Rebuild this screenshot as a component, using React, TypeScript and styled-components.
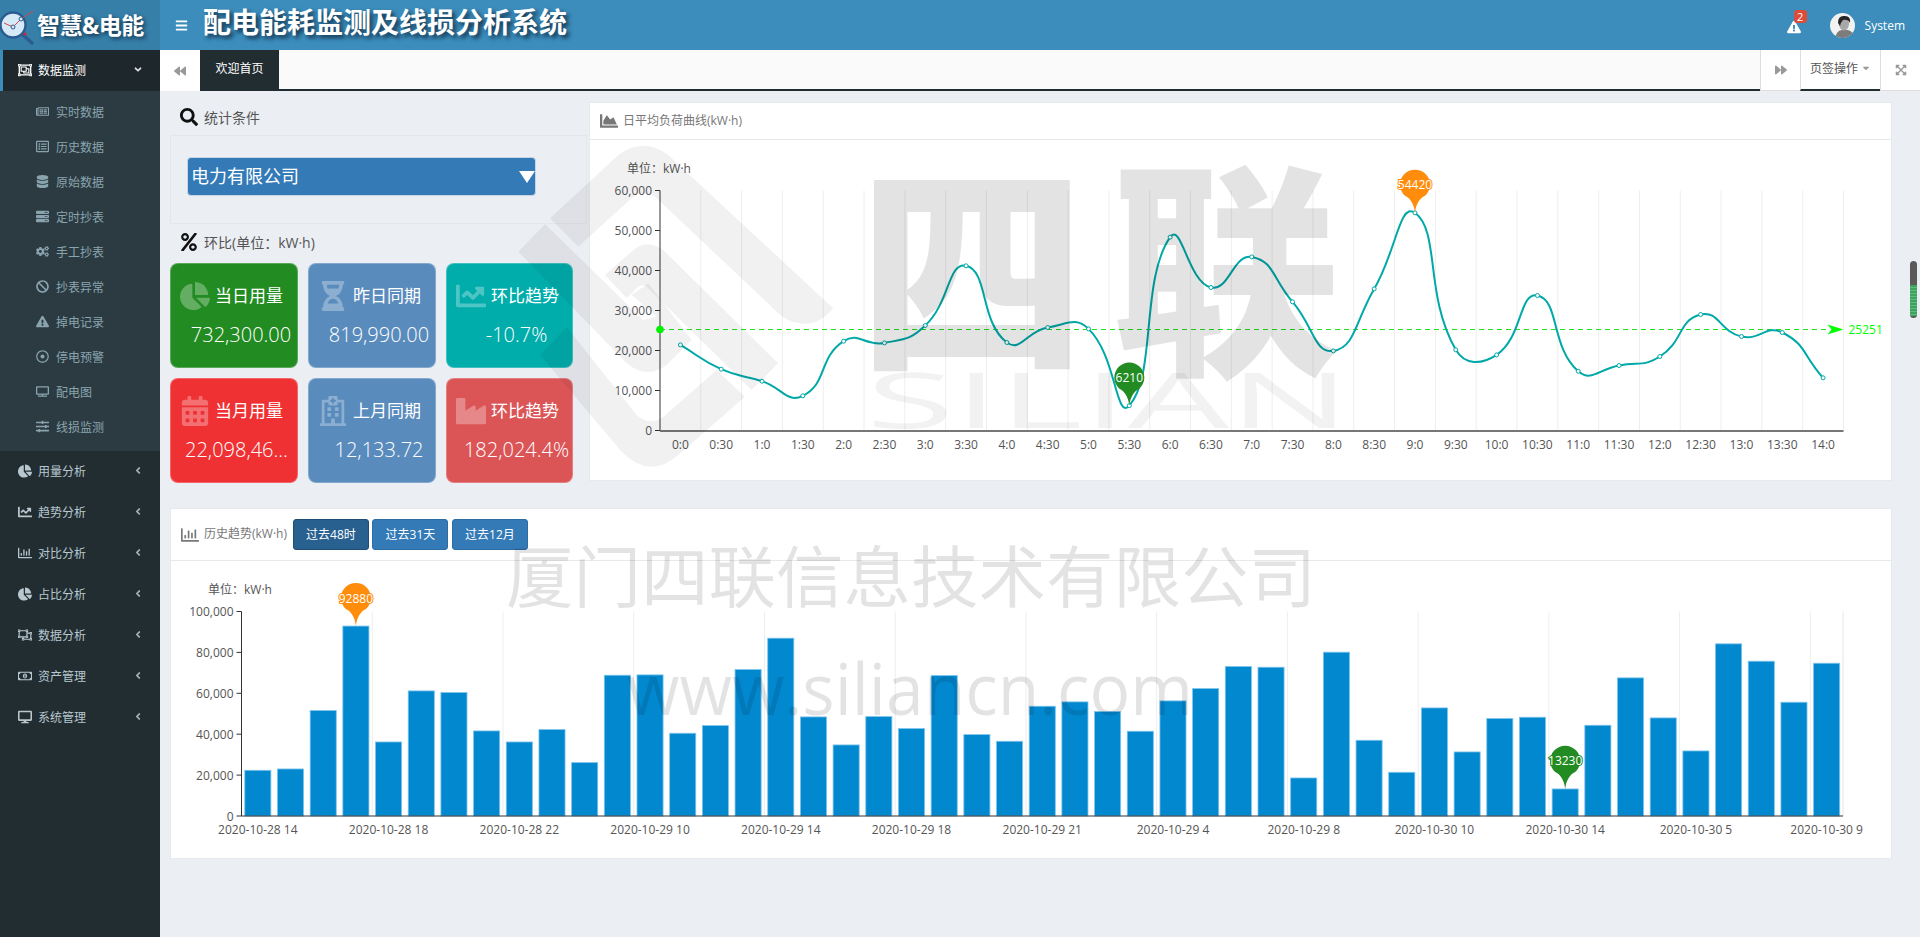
import React from 'react';
import styled, { createGlobalStyle } from 'styled-components';
import {
  FaAngleDown,
  FaAngleLeft,
  FaBackward,
  FaBan,
  FaBars,
  FaCalendarAlt,
  FaCaretDown,
  FaChartArea,
  FaChartLine,
  FaChartPie,
  FaCogs,
  FaDatabase,
  FaDesktop,
  FaExclamationTriangle,
  FaExpandArrowsAlt,
  FaForward,
  FaHourglassHalf,
  FaIndustry,
  FaPercent,
  FaRegChartBar,
  FaRegDotCircle,
  FaRegHospital,
  FaRegListAlt,
  FaRegMoneyBillAlt,
  FaRegNewspaper,
  FaRegObjectGroup,
  FaRegObjectUngroup,
  FaSearch,
  FaServer,
  FaSlidersH,
  FaTv,
} from 'react-icons/fa';

const FONT = `"Open Sans", "Noto Sans CJK SC", sans-serif`;

const GlobalStyle = createGlobalStyle`
  html, body {
    margin: 0;
    padding: 0;
    height: 100%;
    overflow: hidden;
    background: #ebeef3;
    font-family: ${FONT};
  }
  * {
    box-sizing: border-box;
  }
`;

const Page = styled.div`
  position: relative;
  width: 1920px;
  height: 937px;
  overflow: hidden;
  display: flex;
  flex-direction: column;
`;

/* top bar */
const Header = styled.header`
  height: 50px;
  flex: none;
  display: flex;
  align-items: center;
  background: #3c8dbc;
  color: #fff;
`;

const Brand = styled.div`
  width: 160px;
  height: 50px;
  flex: none;
  display: flex;
  align-items: center;
  padding-bottom: 3px;
  background: #367fa9;
  font-size: 23px;
  font-weight: 700;
  letter-spacing: -0.5px;
  text-shadow: 2px 2px 4px #12314a;
  svg {
    flex: none;
    margin: 3px 3px 0 0;
  }
`;

const MenuToggle = styled.div`
  width: 43px;
  display: flex;
  justify-content: center;
  font-size: 13px;
`;

const SystemTitle = styled.h1`
  margin: 0;
  font-size: 28px;
  font-weight: 700;
  line-height: 44px;
  padding-bottom: 6px;
  text-shadow: 3px 3px 4px #12314a;
`;

const HeaderRight = styled.div`
  margin-left: auto;
  display: flex;
  align-items: center;
  padding-right: 15px;
  font-size: 12px;
`;

const Alert = styled.div`
  position: relative;
  font-size: 14px;
  display: flex;
  margin-right: 29px;
  margin-top: 3px;
`;

const Badge = styled.span`
  position: absolute;
  top: -10px;
  left: 7px;
  width: 13px;
  height: 13px;
  border-radius: 3px;
  background: #dd4b39;
  font-size: 11px;
  line-height: 13px;
  text-align: center;
`;

const UserName = styled.span`
  margin-left: 10px;
`;

/* body */
const Body = styled.div`
  flex: 1;
  display: flex;
  min-height: 0;
`;

const Sidebar = styled.aside`
  width: 160px;
  flex: none;
  background: #222d32;
  font-size: 12px;
`;

const MenuItem = styled.div<{ $active?: boolean }>`
  height: 41px;
  display: flex;
  align-items: center;
  padding-left: ${(p) => (p.$active ? '15px' : '18px')};
  padding-right: 18px;
  padding-bottom: 2px;
  color: ${(p) => (p.$active ? '#fff' : '#b8c7ce')};
  background: ${(p) => (p.$active ? '#1e282c' : 'transparent')};
  border-left: ${(p) => (p.$active ? '3px solid #3c8dbc' : 'none')};
  svg:first-child {
    width: 14px;
    height: 14px;
    margin-right: 6px;
    flex: none;
  }
  svg:last-child {
    margin-left: auto;
    width: 8px;
    height: 11px;
    opacity: 0.85;
  }
`;

const SubMenu = styled.div`
  background: #2c3b41;
  padding: 5px 0;
`;

const SubItem = styled.div`
  height: 35px;
  display: flex;
  align-items: center;
  padding-left: 36px;
  padding-bottom: 4px;
  color: #8aa4af;
  svg {
    width: 13px;
    height: 13px;
    margin-right: 7px;
    flex: none;
  }
`;

const Main = styled.main`
  flex: 1;
  min-width: 0;
  display: flex;
  flex-direction: column;
`;

const TabBar = styled.div`
  height: 41px;
  flex: none;
  display: flex;
  background: #fafafa;
  border-bottom: 2px solid #222d32;
  font-size: 12px;
`;

const TabButton = styled.div<{ $side?: boolean }>`
  width: 40px;
  height: 41px;
  flex: none;
  display: flex;
  align-items: center;
  justify-content: center;
  background: #fff;
  color: #999;
  font-size: 12px;
  border-left: ${(p) => (p.$side ? '1px solid #ddd' : 'none')};
  border-bottom: ${(p) => (p.$side ? '1px solid #ddd' : 'none')};
`;

const ActiveTab = styled.div`
  width: 79px;
  height: 39px;
  display: flex;
  align-items: center;
  justify-content: center;
  padding-bottom: 4px;
  background: #222d32;
  color: #fff;
`;

const Spacer = styled.div`
  flex: 1;
`;

const TabMenu = styled.div`
  width: 80px;
  height: 41px;
  flex: none;
  display: flex;
  align-items: center;
  justify-content: center;
  gap: 3px;
  padding-bottom: 3px;
  background: #fff;
  color: #555;
  border-left: 1px solid #ddd;
  border-bottom: 2px solid #222d32;
  svg {
    color: #999;
    font-size: 10px;
  }
`;

const Content = styled.div`
  flex: 1;
  padding: 11px 28px 0 10px;
`;

const TopRow = styled.div`
  display: flex;
  height: 379px;
`;

const LeftColumn = styled.section`
  width: 419px;
  flex: none;
`;

const SectionTitle = styled.div<{ $height: number }>`
  height: ${(p) => p.$height}px;
  display: flex;
  align-items: center;
  padding: 0 0 4px 10px;
  gap: 6px;
  color: #555;
  font-size: 14px;
  svg {
    color: #111;
    font-size: 18px;
    flex: none;
  }
`;

const FilterBox = styled.div`
  width: 417px;
  height: 89px;
  padding: 21px 0 0 16px;
  border: 1px solid #e4e7ea;
`;

const CompanySelect = styled.div`
  position: relative;
  width: 349px;
  height: 39px;
  padding-left: 3px;
  border: 1px solid #c5d5e6;
  border-radius: 4px;
  background: #337ab7;
  color: #fff;
  font-size: 18px;
  line-height: 37px;
  &::after {
    content: '';
    position: absolute;
    right: 0;
    top: 13px;
    border-left: 8px solid transparent;
    border-right: 8px solid transparent;
    border-top: 12px solid #fff;
  }
`;

const CardGrid = styled.div`
  display: grid;
  grid-template-columns: 128px 128px 127px;
  grid-auto-rows: 105px;
  column-gap: 10px;
  row-gap: 10px;
`;

const Card = styled.div<{ $color: string }>`
  background: ${(p) => p.$color};
  border-radius: 8px;
  border: 1px solid rgba(255, 255, 255, 0.25);
  color: #fff;
  padding: 15px 0 0 0;
  overflow: hidden;
`;

const CardHead = styled.div`
  display: flex;
  align-items: center;
  height: 34px;
`;

const CardIcon = styled.div`
  width: 44px;
  flex: none;
  padding-left: 9px;
  display: flex;
  color: rgba(255, 255, 255, 0.3);
  font-size: 30px;
`;

const CardTitle = styled.div`
  font-size: 17px;
  white-space: nowrap;
  margin-bottom: 4px;
`;

const CardValue = styled.div`
  margin: 8px 0 0 14px;
  font-size: 20px;
  line-height: 28px;
  font-weight: 300;
  text-align: center;
  white-space: nowrap;
  overflow: hidden;
  text-overflow: ellipsis;
`;

const Panel = styled.section`
  background: #fff;
  border: 1px solid #e7eaec;
  flex: 1;
  min-width: 0;
`;

const PanelHead = styled.div<{ $height: number }>`
  height: ${(p) => p.$height}px;
  display: flex;
  align-items: center;
  padding-left: 10px;
  border-bottom: 1px solid #e7eaec;
  color: #777;
  font-size: 12px;
  svg {
    font-size: 18px;
    margin-right: 5px;
    color: #777;
    flex: none;
  }
`;

const PanelTitle = styled.span`
  padding-bottom: 3px;
`;

const RangeButton = styled.div<{ $active?: boolean }>`
  width: 76px;
  height: 31px;
  display: flex;
  align-items: center;
  justify-content: center;
  padding-bottom: 2px;
  border-radius: 3px;
  color: #fff;
  background: ${(p) => (p.$active ? '#286090' : '#337ab7')};
  border: 1px solid ${(p) => (p.$active ? '#204d74' : '#2e6da4')};
  margin-right: 3.5px;
  &:first-of-type {
    margin-left: 6px;
  }
`;

const BottomPanel = styled(Panel)`
  margin-top: 27px;
  height: 351px;
`;

const ChartSvg = styled.svg`
  display: block;
`;

const AxisText = styled.text`
  font-family: ${FONT};
  font-size: 12px;
  fill: #555;
`;

const PinText = styled.text<{ $stroke: string }>`
  font-family: ${FONT};
  font-size: 12px;
  fill: #fff;
  stroke: ${(p) => p.$stroke};
  stroke-width: 2px;
  paint-order: stroke;
  text-anchor: middle;
  dominant-baseline: central;
`;

const MarkText = styled.text`
  font-family: ${FONT};
  font-size: 12px;
  fill: #00ff00;
`;

/* page watermark, lies over everything */
const WatermarkLayer = styled.svg`
  position: absolute;
  left: 0;
  top: 0;
  pointer-events: none;
  z-index: 5;
`;

const WatermarkText = styled.text<{ $size: number; $weight: number; $alpha: number }>`
  font-family: ${FONT};
  font-size: ${(p) => p.$size}px;
  font-weight: ${(p) => p.$weight};
  fill: rgba(0, 0, 0, ${(p) => p.$alpha});
`;

/* scroll widget on the right edge */
const ScrollWidget = styled.div`
  position: absolute;
  right: 3px;
  top: 261px;
  width: 7px;
  height: 57px;
  border-radius: 4px;
  overflow: hidden;
  background: #5a5a5a;
  z-index: 6;
  &::after {
    content: '';
    position: absolute;
    left: 0;
    right: 0;
    top: 24px;
    bottom: 2px;
    background: repeating-linear-gradient(#3fa35f 0 2px, #5dbb7b 2px 3px);
  }
`;

const subItems: [React.ComponentType, string][] = [
  [FaRegNewspaper, '实时数据'],
  [FaRegListAlt, '历史数据'],
  [FaDatabase, '原始数据'],
  [FaServer, '定时抄表'],
  [FaCogs, '手工抄表'],
  [FaBan, '抄表异常'],
  [FaExclamationTriangle, '掉电记录'],
  [FaRegDotCircle, '停电预警'],
  [FaTv, '配电图'],
  [FaSlidersH, '线损监测'],
];

const menuItems: [React.ComponentType, string][] = [
  [FaChartPie, '用量分析'],
  [FaChartLine, '趋势分析'],
  [FaRegChartBar, '对比分析'],
  [FaChartPie, '占比分析'],
  [FaRegObjectUngroup, '数据分析'],
  [FaRegMoneyBillAlt, '资产管理'],
  [FaDesktop, '系统管理'],
];

const cards: [React.ComponentType, string, string, string][] = [
  [FaChartPie, '当日用量', '732,300.00', '#228b22'],
  [FaHourglassHalf, '昨日同期', '819,990.00', '#598bbd'],
  [FaChartLine, '环比趋势', '-10.7%', '#00adab'],
  [FaCalendarAlt, '当月用量', '22,098,460.00', '#ef3134'],
  [FaRegHospital, '上月同期', '12,133.72', '#598bbd'],
  [FaIndustry, '环比趋势', '182,024.4%', '#db5557'],
];

const hours = Array.from({ length: 29 }, (_, i) => `${Math.floor(i / 2)}:${i % 2 ? '30' : '0'}`);
const dayLoad = [
  21400, 15330, 12330, 8670, 22330, 21900, 26250, 41170, 22000, 25750, 25400, 6210, 48330, 35750,
  43400, 32170, 19900, 35400, 54420, 20170, 18900, 33750, 14830, 16250, 18500, 29000, 23500, 24500,
  13170,
];

const history = [
  22350, 23000, 51550, 92880, 36200, 61170, 60360, 41600, 36200, 42250, 26100, 68840, 69000, 40460,
  44200, 71600, 86950, 48450, 34750, 48600, 42740, 68680, 39800, 36540, 53670, 55800, 51060, 41440,
  56280, 62300, 73080, 72750, 18600, 80100, 37030, 21370, 52850, 31320, 47630, 48290, 13230, 44370,
  67540, 47960, 31810, 84180, 75690, 55630, 74700,
];

const historyLabels = [
  '2020-10-28 14',
  '2020-10-28 18',
  '2020-10-28 22',
  '2020-10-29 10',
  '2020-10-29 14',
  '2020-10-29 18',
  '2020-10-29 21',
  '2020-10-29 4',
  '2020-10-29 8',
  '2020-10-30 10',
  '2020-10-30 14',
  '2020-10-30 5',
  '2020-10-30 9',
];

// same bezier rule as the chart library's smooth line
const smoothPath = (pts: [number, number][], smooth = 0.5) => {
  const clamp = (i: number) => pts[Math.max(0, Math.min(pts.length - 1, i))];
  let d = `M${pts[0][0]} ${pts[0][1]}`;
  const controls = (i: number) => {
    const [x, y] = pts[i];
    const [px, py] = clamp(i - 1);
    const [nx, ny] = clamp(i + 1);
    const l0 = Math.hypot(x - px, y - py);
    const l1 = Math.hypot(nx - x, ny - y);
    const r = l0 + l1 === 0 ? 0 : l1 / (l0 + l1);
    const dx = (nx - px) * smooth;
    const dy = (ny - py) * smooth;
    return {
      before: [x - dx * (1 - r), y - dy * (1 - r)],
      after: [x + dx * r, y + dy * r],
    };
  };
  for (let i = 1; i < pts.length; i++) {
    const a = controls(i - 1).after;
    const b = controls(i).before;
    d += ` C${a[0]} ${a[1]} ${b[0]} ${b[1]} ${pts[i][0]} ${pts[i][1]}`;
  }
  return d;
};

const Pin = ({ x, y, label, color, height = 43 }: { x: number; y: number; label: string; color: string; height?: number }) => {
  const cy = y - height + 15;
  return (
    <g>
      <path
        d={`M${x} ${y} C${x - 1} ${y - 9} ${x - 5} ${y - 15} ${x - 10} ${cy + 11} A15 15 0 1 1 ${x + 10} ${cy + 11} C${x + 5} ${y - 15} ${x + 1} ${y - 9} ${x} ${y} Z`}
        fill={color}
      />
      <PinText x={x} y={cy} $stroke={color}>
        {label}
      </PinText>
    </g>
  );
};

const YAxis = ({ left, top, bottom, labels }: { left: number; top: number; bottom: number; labels: string[] }) => (
  <g>
    <line x1={left} x2={left} y1={top} y2={bottom} stroke="#333" />
    {labels.map((t, i) => {
      const y = bottom - ((bottom - top) * i) / (labels.length - 1);
      return (
        <g key={t}>
          <line x1={left - 5} x2={left} y1={y} y2={y} stroke="#333" />
          <AxisText x={left - 8} y={y} textAnchor="end" dominantBaseline="central">
            {t}
          </AxisText>
        </g>
      );
    })}
  </g>
);

const LoadChart = () => {
  const width = 1301;
  const left = 70;
  const right = 1253.5;
  const top = 50.5;
  const bottom = 290.5;
  const step = (right - left) / dayLoad.length;
  const px = (i: number) => left + step * (i + 0.5);
  const py = (v: number) => bottom - ((bottom - top) * v) / 60000;
  const pts = dayLoad.map((v, i) => [px(i), py(v)] as [number, number]);
  const markY = py(25251);
  return (
    <ChartSvg width={width} height={340}>
      {dayLoad.map((_, i) => (
        <line key={i} x1={left + step * (i + 1)} x2={left + step * (i + 1)} y1={top} y2={bottom} stroke="#eee" />
      ))}
      <AxisText x={37} y={28} dominantBaseline="central">
        单位：kW·h
      </AxisText>
      <YAxis left={left} top={top} bottom={bottom} labels={['0', '10,000', '20,000', '30,000', '40,000', '50,000', '60,000']} />
      <line x1={left} x2={right} y1={bottom + 0.5} y2={bottom + 0.5} stroke="#777" strokeWidth={2} />
      {hours.map((h, i) => (
        <AxisText key={h} x={px(i)} y={304} textAnchor="middle" dominantBaseline="central">
          {h}
        </AxisText>
      ))}
      <line x1={left} x2={right - 16} y1={markY} y2={markY} stroke="#1ee01e" strokeWidth={1.2} strokeDasharray="5 4" />
      <circle cx={left} cy={markY} r={3.8} fill="#00ff00" />
      <path d={`M${right - 16} ${markY - 5} L${right} ${markY} L${right - 16} ${markY + 5} L${right - 12} ${markY} Z`} fill="#00ff00" />
      <MarkText x={right + 5} y={markY} dominantBaseline="central">
        25251
      </MarkText>
      <path d={smoothPath(pts)} fill="none" stroke="#00a8a8" strokeWidth={2} />
      {pts.map(([x, y], i) => (
        <circle key={i} cx={x} cy={y} r={2} fill="#fff" stroke="#00a8a8" />
      ))}
      <Pin x={px(18)} y={py(54420)} label="54420" color="#ff8c0a" />
      <Pin x={px(11)} y={py(6210)} label="6210" color="#228b22" />
    </ChartSvg>
  );
};

const HistoryChart = () => {
  const left = 70.5;
  const right = 1672;
  const top = 50.5;
  const bottom = 255;
  const step = (right - left) / history.length;
  const py = (v: number) => bottom - ((bottom - top) * v) / 100000;
  return (
    <ChartSvg width={1720} height={298}>
      {historyLabels.map((_, i) => {
        const x = left + step * (i + 1) * 4;
        return <line key={i} x1={Math.min(x, right)} x2={Math.min(x, right)} y1={top} y2={bottom} stroke="#eee" />;
      })}
      <line x1={right} x2={right} y1={top} y2={bottom} stroke="#eee" />
      {history.map((v, i) => (
        <rect
          key={i}
          x={left + step * i + 3.3}
          y={py(v)}
          width={step - 6.6}
          height={bottom - py(v)}
          fill="#0288cf"
          stroke="#7cc4ec"
          strokeWidth={0.8}
        />
      ))}
      <AxisText x={37} y={28} dominantBaseline="central">
        单位：kW·h
      </AxisText>
      <YAxis left={left} top={top} bottom={bottom} labels={['0', '20,000', '40,000', '60,000', '80,000', '100,000']} />
      <line x1={left} x2={right} y1={bottom} y2={bottom} stroke="#333" />
      {historyLabels.map((t, i) => (
        <AxisText key={i} x={left + step * (i * 4 + 0.5)} y={268} textAnchor="middle" dominantBaseline="central">
          {t}
        </AxisText>
      ))}
      <Pin x={left + step * 3.5} y={py(92880)} label="92880" color="#ff8c0a" />
      <Pin x={left + step * 40.5} y={py(13230)} label="13230" color="#228b22" />
    </ChartSvg>
  );
};

const Watermark = () => (
  <WatermarkLayer width={1920} height={937}>
    <g transform="translate(500 140) scale(0.3333)" fill="rgba(0,0,0,0.055)">
      <path d="M150 235 L355 45 Q430 -10 505 45 L1000 505 Q955 560 900 550 Q860 545 830 515 L465 170 Q430 150 400 170 L235 320 Z" />
      <path d="M315 405 L400 330 Q440 295 490 330 L835 670 L755 750 L440 440 Q425 430 410 445 L380 475 Z" />
      <path d="M135 252 L430 540 L470 530 L395 465 L445 430 L575 600 L500 675 Q440 720 380 670 L55 335 Z" />
      <path d="M120 645 L365 935 Q450 1020 535 945 L735 770 L650 690 L490 830 Q450 860 410 825 L200 560 Z" />
    </g>
    <WatermarkText x="858 1112" y={357} $size={228} $weight={900} $alpha={0.11}>
      四联
    </WatermarkText>
    <WatermarkText x={866} y={428} $size={76} $weight={500} $alpha={0.05} textLength={484} lengthAdjust="spacingAndGlyphs">
      SILIAN
    </WatermarkText>
    <WatermarkText x={506} y={602} $size={67.5} $weight={400} $alpha={0.11}>
      厦门四联信息技术有限公司
    </WatermarkText>
    <WatermarkText x={627} y={715} $size={72} $weight={400} $alpha={0.11} textLength={566} lengthAdjust="spacingAndGlyphs">
      www.siliancn.com
    </WatermarkText>
  </WatermarkLayer>
);

const LogoIcon = () => (
  <svg width="34" height="50" viewBox="0 0 34 50">
    <circle cx="13" cy="25" r="12.5" fill="#d5e9f7" stroke="#2b5c8f" strokeWidth="2.4" />
    <path d="M4 23 L13 27 L21 19 L33 11" fill="none" stroke="#d64550" strokeWidth="1" />
    <circle cx="13" cy="27" r="2" fill="#d5e9f7" stroke="#2b5c8f" />
    <circle cx="21" cy="19" r="2" fill="#d5e9f7" stroke="#2b5c8f" />
    <path d="M23 35 L32 43" stroke="#2b5c8f" strokeWidth="3.4" strokeLinecap="round" />
    <circle cx="25" cy="34" r="1.6" fill="#d6243a" />
  </svg>
);

const Avatar = () => (
  <svg width="25" height="25" viewBox="0 0 25 25">
    <defs>
      <clipPath id="avatar-clip">
        <circle cx="12.5" cy="12.5" r="12.5" />
      </clipPath>
    </defs>
    <g clipPath="url(#avatar-clip)">
      <rect width="25" height="25" fill="#f2f2f2" />
      <path d="M5 25 Q7 17 12 17 L18 17 Q24 19 25 25 Z" fill="#7c7c7c" />
      <ellipse cx="14" cy="11" rx="5" ry="6.5" fill="#a8a8a8" />
      <path d="M8 10 Q8 2 15 3 Q21 3 20 10 Q18 6 13 7 Q11 9 10 13 Z" fill="#262626" />
    </g>
  </svg>
);

const App = () => (
  <Page>
    <GlobalStyle />
    <Header>
      <Brand>
        <LogoIcon />
        智慧&amp;电能
      </Brand>
      <MenuToggle>
        <FaBars />
      </MenuToggle>
      <SystemTitle>配电能耗监测及线损分析系统</SystemTitle>
      <HeaderRight>
        <Alert>
          <FaExclamationTriangle />
          <Badge>2</Badge>
        </Alert>
        <Avatar />
        <UserName>System</UserName>
      </HeaderRight>
    </Header>
    <Body>
      <Sidebar>
        <MenuItem $active>
          <FaRegObjectGroup />
          数据监测
          <FaAngleDown />
        </MenuItem>
        <SubMenu>
          {subItems.map(([Icon, label]) => (
            <SubItem key={label}>
              <Icon />
              {label}
            </SubItem>
          ))}
        </SubMenu>
        {menuItems.map(([Icon, label]) => (
          <MenuItem key={label}>
            <Icon />
            {label}
            <FaAngleLeft />
          </MenuItem>
        ))}
      </Sidebar>
      <Main>
        <TabBar>
          <TabButton>
            <FaBackward />
          </TabButton>
          <ActiveTab>欢迎首页</ActiveTab>
          <Spacer />
          <TabButton $side>
            <FaForward />
          </TabButton>
          <TabMenu>
            页签操作
            <FaCaretDown />
          </TabMenu>
          <TabButton $side>
            <FaExpandArrowsAlt />
          </TabButton>
        </TabBar>
        <Content>
          <TopRow>
            <LeftColumn>
              <SectionTitle $height={33}>
                <FaSearch />
                统计条件
              </SectionTitle>
              <FilterBox>
                <CompanySelect>电力有限公司</CompanySelect>
              </FilterBox>
              <SectionTitle $height={39}>
                <FaPercent />
                环比(单位：kW·h)
              </SectionTitle>
              <CardGrid>
                {cards.map(([Icon, title, value, color], i) => (
                  <Card key={i} $color={color}>
                    <CardHead>
                      <CardIcon>
                        <Icon />
                      </CardIcon>
                      <CardTitle>{title}</CardTitle>
                    </CardHead>
                    <CardValue>{value}</CardValue>
                  </Card>
                ))}
              </CardGrid>
            </LeftColumn>
            <Panel>
              <PanelHead $height={37}>
                <FaChartArea />
                <PanelTitle>日平均负荷曲线(kW·h)</PanelTitle>
              </PanelHead>
              <LoadChart />
            </Panel>
          </TopRow>
          <BottomPanel>
            <PanelHead $height={52}>
              <FaRegChartBar />
              <PanelTitle>历史趋势(kW·h)</PanelTitle>
              <RangeButton $active>过去48时</RangeButton>
              <RangeButton>过去31天</RangeButton>
              <RangeButton>过去12月</RangeButton>
            </PanelHead>
            <HistoryChart />
          </BottomPanel>
        </Content>
      </Main>
    </Body>
    <Watermark />
    <ScrollWidget />
  </Page>
);

export default App;
